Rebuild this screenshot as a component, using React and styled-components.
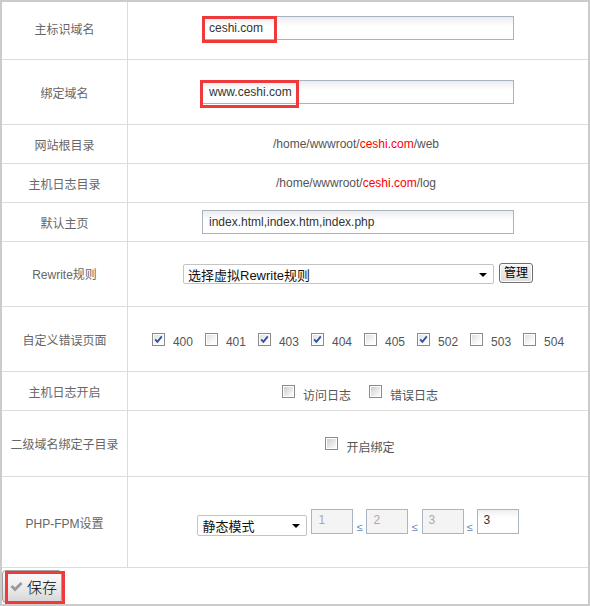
import styled, { createGlobalStyle } from "styled-components";

const GlobalStyle = createGlobalStyle`
  html, body {
    margin: 0;
    padding: 0;
    background: #fff;
  }
  body {
    font-family: "Liberation Sans", "Noto Sans CJK SC", sans-serif;
    font-size: 12px;
    color: #555;
  }
`;

const errorCodes = [
  { code: "400", on: true },
  { code: "401", on: false },
  { code: "403", on: true },
  { code: "404", on: true },
  { code: "405", on: false },
  { code: "502", on: true },
  { code: "503", on: false },
  { code: "504", on: false },
];

const CheckMark = () => (
  <svg width="9" height="9" viewBox="0 0 9 9">
    <path
      d="M1.2 4.4 L3.4 6.8 L7.8 1.4"
      fill="none"
      stroke="#2b4fa8"
      strokeWidth="1.8"
    />
  </svg>
);

const SaveIcon = () => (
  <svg width="13" height="11" viewBox="0 0 13 11">
    <path d="M0.5 6 L2.5 4 L5 6.5 L10.5 1 L12.5 3 L5 10.5 Z" fill="#9a9a9a" />
  </svg>
);

const Check = ({ on, $soft }) => (
  <Box $on={on} $soft={$soft}>{on && <CheckMark />}</Box>
);

const App = () => {
  return (
    <>
      <GlobalStyle />
      <Panel>
        <Row $h={58}>
          <Label $shift={5}>主标识域名</Label>
          <Value $shift={6}>
            <Field>
              <TextInput $w={312} defaultValue="ceshi.com" />
              <Highlight $left={0} $top={0} $w={75} $h={27} />
            </Field>
          </Value>
        </Row>
        <Row $h={65}>
          <Label>绑定域名</Label>
          <Value>
            <Field>
              <TextInput $w={312} defaultValue="www.ceshi.com" />
              <Highlight $left={-2} $top={0} $w={99} $h={28} />
            </Field>
          </Value>
        </Row>
        <Row $h={39}>
          <Label>网站根目录</Label>
          <Value>
            <Path>
              /home/wwwroot/<Red>ceshi.com</Red>/web
            </Path>
          </Value>
        </Row>
        <Row $h={39}>
          <Label>主机日志目录</Label>
          <Value>
            <Path>
              /home/wwwroot/<Red>ceshi.com</Red>/log
            </Path>
          </Value>
        </Row>
        <Row $h={39}>
          <Label>默认主页</Label>
          <Value>
            <TextInput $w={312} defaultValue="index.html,index.htm,index.php" />
          </Value>
        </Row>
        <Row $h={65}>
          <Label $shift={1}>Rewrite规则</Label>
          <Value>
            <Inline $gap={5}>
              <SelectBox $w={311}>
                选择虚拟Rewrite规则
                <Arrow />
              </SelectBox>
              <SmallButton>管理</SmallButton>
            </Inline>
          </Value>
        </Row>
        <Row $h={65}>
          <Label>自定义错误页面</Label>
          <Value>
            <Inline $gap={12}>
              {errorCodes.map((item) => (
                <Option key={item.code}>
                  <Check on={item.on} />
                  <OptionText $lift={1}>{item.code}</OptionText>
                </Option>
              ))}
            </Inline>
          </Value>
        </Row>
        <Row $h={39}>
          <Label>主机日志开启</Label>
          <Value>
            <Inline $gap={18} $nudge={4}>
              <Option>
                <Check on={false} $soft />
                <OptionText>访问日志</OptionText>
              </Option>
              <Option>
                <Check on={false} $soft />
                <OptionText>错误日志</OptionText>
              </Option>
            </Inline>
          </Value>
        </Row>
        <Row $h={66}>
          <Label>二级域名绑定子目录</Label>
          <Value>
            <Inline $nudge={4}>
              <Option>
                <Check on={false} $soft />
                <OptionText>开启绑定</OptionText>
              </Option>
            </Inline>
          </Value>
        </Row>
        <Row $h={91}>
          <Label>PHP-FPM设置</Label>
          <Value>
            <FpmLine>
              <SelectBox $w={110} $h={21} $drop={6}>
                静态模式
                <Arrow />
              </SelectBox>
              <NumInput disabled defaultValue="1" />
              <Le>≤</Le>
              <NumInput disabled defaultValue="2" />
              <Le>≤</Le>
              <NumInput disabled defaultValue="3" />
              <Le>≤</Le>
              <NumInput defaultValue="3" />
            </FpmLine>
          </Value>
        </Row>
        <Footer>
          <Field>
            <SaveButton>
              <SaveIcon />
              保存
            </SaveButton>
            <Highlight $left={3} $top={1} $w={60} $h={33} />
          </Field>
        </Footer>
      </Panel>
    </>
  );
};

const Panel = styled.div`
  width: 590px;
  height: 606px;
  box-sizing: border-box;
  border: 2px solid #cbcbcb;
  display: flex;
  flex-direction: column;
`;

const Row = styled.div`
  display: flex;
  height: ${(p) => p.$h}px;
  box-sizing: border-box;
  border-bottom: 1px solid #dcdcdc;
`;

const Label = styled.div`
  width: 126px;
  flex-shrink: 0;
  box-sizing: border-box;
  border-right: 1px solid #dcdcdc;
  padding-bottom: ${(p) => p.$shift || 0}px;
  display: flex;
  align-items: center;
  justify-content: center;
  font-size: 12px;
  color: #666;
  white-space: nowrap;
`;

const Value = styled.div`
  flex: 1;
  display: flex;
  align-items: center;
  justify-content: center;
  padding-bottom: ${(p) => p.$shift || 0}px;
`;

const Field = styled.div`
  position: relative;
  display: inline-flex;
`;

const TextInput = styled.input`
  width: ${(p) => p.$w}px;
  height: 24px;
  box-sizing: border-box;
  margin: 0;
  padding: 0 6px;
  border: 1px solid #a9b3c4;
  background: linear-gradient(#ececec, #fff 9px);
  font-family: "Liberation Sans", "Noto Sans CJK SC", sans-serif;
  font-size: 12px;
  color: #333;
  outline: none;
`;

const Highlight = styled.span`
  position: absolute;
  left: ${(p) => p.$left}px;
  top: ${(p) => p.$top}px;
  width: ${(p) => p.$w}px;
  height: ${(p) => p.$h}px;
  box-sizing: border-box;
  border: 3px solid #f0393b;
  pointer-events: none;
`;

const Path = styled.span`
  font-size: 12px;
  color: #555;
  margin-left: -4px;
`;

const Red = styled.span`
  color: #f00;
`;

const Inline = styled.div`
  display: flex;
  align-items: center;
  gap: ${(p) => p.$gap || 0}px;
  margin-left: ${(p) => p.$nudge || 0}px;
`;

const SelectBox = styled.div`
  width: ${(p) => p.$w}px;
  height: ${(p) => p.$h || 20}px;
  box-sizing: border-box;
  border: 1px solid #c4c4c4;
  border-radius: 2px;
  background: #fff;
  display: flex;
  align-items: center;
  justify-content: space-between;
  padding: 0 6px 0 4px;
  margin-top: ${(p) => p.$drop || 0}px;
  font-size: 13px;
  color: #111;
  white-space: nowrap;
`;

const Arrow = styled.span`
  width: 0;
  height: 0;
  border-left: 4px solid transparent;
  border-right: 4px solid transparent;
  border-top: 4px solid #000;
  margin-top: 2px;
`;

const SmallButton = styled.button`
  width: 34px;
  height: 20px;
  margin: -3px 0 0;
  padding: 0;
  box-sizing: border-box;
  border: 1px solid #6f6f6f;
  border-radius: 3px;
  background: linear-gradient(#f6f6f6, #dcdcdc);
  box-shadow: inset 0 0 0 1px #fff;
  font-family: "Liberation Sans", "Noto Sans CJK SC", sans-serif;
  font-size: 12px;
  color: #000;
  line-height: 18px;
`;

const Option = styled.label`
  display: flex;
  align-items: center;
  gap: 8px;
`;

const Box = styled.span`
  width: 13px;
  height: 13px;
  box-sizing: border-box;
  border: 1px solid #8a8a8a;
  display: flex;
  align-items: center;
  justify-content: center;
  background: ${(p) =>
    p.$soft
      ? "linear-gradient(135deg, #c9c9c9, #f7f7f7 80%)"
      : "linear-gradient(135deg, #dcdcdc, #fbfbfb 70%)"};
  box-shadow: inset 0 0 0 1px #fff;
`;

const OptionText = styled.span`
  font-size: 12px;
  color: #555;
  padding-top: ${(p) => (p.$lift ? 5 : 6)}px;
`;

const FpmLine = styled.div`
  display: flex;
  align-items: flex-start;
  gap: 3px;
`;

const NumInput = styled.input`
  width: 42px;
  height: 25px;
  box-sizing: border-box;
  margin: 0 0 0 1px;
  padding: 0 6px 2px;
  border: 1px solid #aab4c4;
  background: ${(p) =>
    p.disabled ? "#f4f4f4" : "linear-gradient(#efefef, #fff 8px)"};
  font-family: "Liberation Sans", sans-serif;
  font-size: 12px;
  color: ${(p) => (p.disabled ? "#aaa" : "#333")};
  outline: none;
`;

const Le = styled.span`
  margin-top: 12px;
  font-size: 11px;
  color: #5b7fb5;
`;

const Footer = styled.div`
  flex: 1;
  display: flex;
  align-items: flex-start;
  padding-top: 2px;
`;

const SaveButton = styled.button`
  width: 60px;
  height: 33px;
  margin: 0;
  padding: 0 0 0 7px;
  box-sizing: border-box;
  border: 1px solid #a0a0a0;
  border-radius: 4px;
  background: linear-gradient(#fdfdfd, #e9e9e9 60%, #d6d6d6);
  display: flex;
  align-items: center;
  gap: 4px;
  font-family: "Liberation Sans", "Noto Sans CJK SC", sans-serif;
  font-size: 15px;
  font-weight: 300;
  color: #000;
`;

export default App;
